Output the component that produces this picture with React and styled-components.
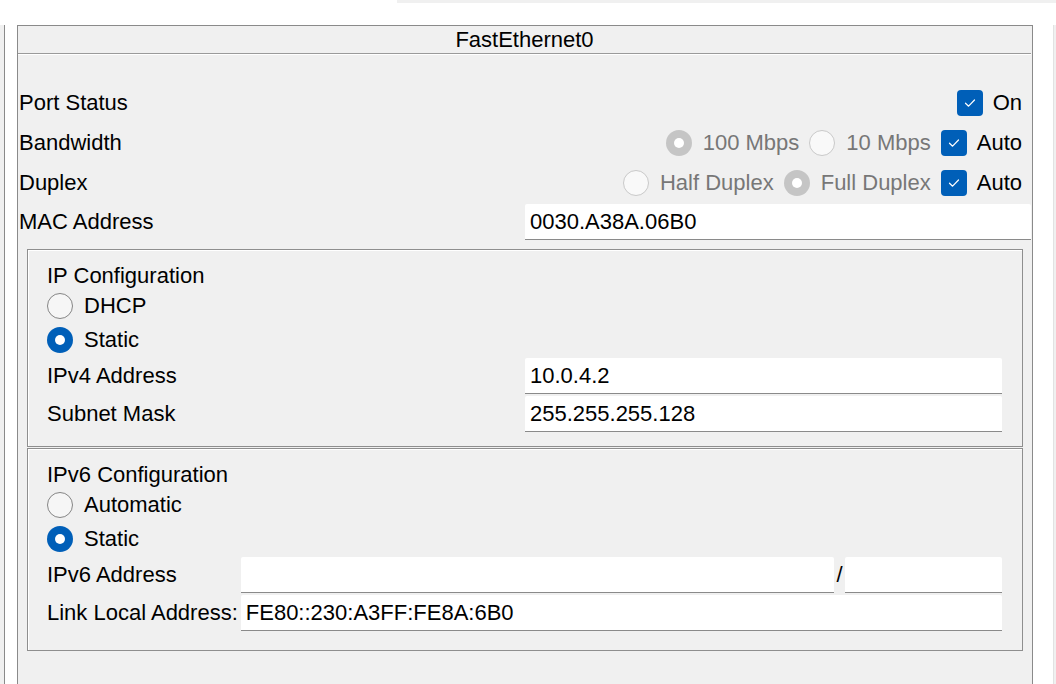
import React from "react";
import styled, { createGlobalStyle } from "styled-components";

const GlobalStyle = createGlobalStyle`
  html, body {
    margin: 0;
    padding: 0;
    background: #ffffff;
    overflow: hidden;
  }
  body {
    font-family: "Liberation Sans", Arial, sans-serif;
    font-size: 22px;
    color: #000;
  }
`;

const Page = styled.div`
  width: 1056px;
  height: 684px;
  overflow: hidden;
  display: flex;
  flex-direction: column;
`;

const TopBand = styled.div`
  flex: none;
  height: 3px;
  margin-left: 397px;
  background: #f0f0f0;
`;

const Workspace = styled.div`
  flex: none;
  display: flex;
  margin-top: 22px;
`;

const SideStrip = styled.div`
  width: 4px;
  background: #f0f0f0;
  border-right: 1px solid #8a8a8a;
`;

const EdgeStrip = styled.div`
  width: 2px;
  margin-left: auto;
  background: #f0f0f0;
  border-left: 1px solid #e2e2e2;
`;

const Panel = styled.section`
  margin-left: 12px;
  width: 1014px;
  height: 680px;
  background: #f0f0f0;
  border: 1px solid #8a8a8a;
  display: flex;
  flex-direction: column;
`;

const PanelTitle = styled.div`
  height: 27px;
  display: flex;
  align-items: center;
  justify-content: center;
  line-height: 1;
  margin-right: 1px;
  border-bottom: 1px solid #9a9a9a;
  box-shadow: 0 1px 0 #ffffff;
`;

const PanelBody = styled.div`
  padding: 29px 0 0 1px;
  display: flex;
  flex-direction: column;
`;

const SettingRow = styled.div`
  height: 40px;
  display: flex;
  align-items: center;
  justify-content: space-between;
  padding-right: 10px;
  line-height: 1;
`;

const Text = styled.span`
  white-space: nowrap;
  color: ${(p) => (p.$disabled ? "#777777" : "#000000")};
`;

const Controls = styled.div`
  display: flex;
  align-items: center;
  gap: 10px;
`;

const Option = styled.label`
  display: flex;
  align-items: center;
  gap: ${(p) => p.$gap || 10}px;
`;

const Radio = styled.span`
  box-sizing: border-box;
  width: 26px;
  height: 26px;
  border-radius: 50%;
  display: inline-flex;
  align-items: center;
  justify-content: center;
  flex: none;
  background: ${(p) =>
    p.$checked ? (p.$disabled ? "#c5c5c5" : "#005fb8") : p.$disabled ? "#f9f9f9" : "#f6f6f6"};
  border: ${(p) =>
    p.$checked
      ? "none"
      : p.$disabled
      ? "1px solid #c9c9c9"
      : "1.5px solid #858585"};
  &::after {
    content: "";
    display: ${(p) => (p.$checked ? "block" : "none")};
    width: 10px;
    height: 10px;
    border-radius: 50%;
    background: #ffffff;
  }
`;

const CheckBox = styled.span`
  width: 26px;
  height: 26px;
  border-radius: 4px;
  background: #005fb8;
  display: inline-flex;
  align-items: center;
  justify-content: center;
  flex: none;
`;

const FieldRow = styled.div`
  height: ${(p) => p.$height || 38}px;
  display: grid;
  grid-template-columns: ${(p) => p.$labelWidth}px 1fr;
  align-items: center;
  line-height: 1;
  padding-right: ${(p) => p.$padRight || 0}px;
`;

const TextField = styled.div`
  box-sizing: border-box;
  height: 36px;
  background: #ffffff;
  border-bottom: 1px solid #8a8a8a;
  border-radius: 2px 2px 0 0;
  display: flex;
  align-items: center;
  padding-left: 5px;
  white-space: nowrap;
  width: ${(p) => (p.$width ? `${p.$width}px` : "auto")};
  flex: ${(p) => (p.$width ? "none" : "1")};
`;

const Group = styled.fieldset`
  margin: ${(p) => p.$top || 0}px 9px 0 8px;
  padding: 12px 20px ${(p) => p.$bottom}px 19px;
  border: 1px solid #8e8e8e;
  box-shadow: inset 1px 1px 0 #ffffff;
  display: flex;
  flex-direction: column;
  min-width: 0;
`;

const GroupTitle = styled.div`
  height: 27px;
  display: flex;
  align-items: center;
  line-height: 1;
`;

const RadioRow = styled.div`
  height: 34px;
  display: flex;
  align-items: center;
  line-height: 1;
`;

const V6Grid = styled.div`
  display: grid;
  grid-template-columns: max-content 1fr;
  column-gap: 3px;
  grid-auto-rows: 38px;
  align-items: center;
  line-height: 1;
`;

const AddressPair = styled.div`
  display: flex;
  align-items: center;
`;

const Slash = styled.span`
  width: 11px;
  text-align: center;
`;

const Check = () => (
  <svg width="14" height="14" viewBox="0 0 14 14" fill="none">
    <polyline
      points="2.5,7.2 5.6,10.2 11.5,4"
      stroke="#ffffff"
      strokeWidth="1.2"
      strokeLinecap="round"
      strokeLinejoin="round"
    />
  </svg>
);

const RadioOption = ({ checked, disabled, children }) => (
  <Option $gap={11}>
    <Radio $checked={checked} $disabled={disabled} />
    <Text $disabled={disabled}>{children}</Text>
  </Option>
);

const CheckOption = ({ children }) => (
  <Option $gap={10}>
    <CheckBox>
      <Check />
    </CheckBox>
    <Text>{children}</Text>
  </Option>
);

export default function App() {
  return (
    <>
      <GlobalStyle />
      <Page>
        <TopBand />
        <Workspace>
          <SideStrip />
          <Panel>
            <PanelTitle>FastEthernet0</PanelTitle>
            <PanelBody>
              <SettingRow>
                <Text>Port Status</Text>
                <Controls>
                  <CheckOption>On</CheckOption>
                </Controls>
              </SettingRow>
              <SettingRow>
                <Text>Bandwidth</Text>
                <Controls>
                  <RadioOption checked disabled>
                    100 Mbps
                  </RadioOption>
                  <RadioOption disabled>10 Mbps</RadioOption>
                  <CheckOption>Auto</CheckOption>
                </Controls>
              </SettingRow>
              <SettingRow>
                <Text>Duplex</Text>
                <Controls>
                  <RadioOption disabled>Half Duplex</RadioOption>
                  <RadioOption checked disabled>
                    Full Duplex
                  </RadioOption>
                  <CheckOption>Auto</CheckOption>
                </Controls>
              </SettingRow>
              <FieldRow $labelWidth={506} $padRight={1}>
                <Text>MAC Address</Text>
                <TextField>0030.A38A.06B0</TextField>
              </FieldRow>

              <Group $top={8} $bottom={13}>
                <GroupTitle>IP Configuration</GroupTitle>
                <RadioRow>
                  <RadioOption>DHCP</RadioOption>
                </RadioRow>
                <RadioRow>
                  <RadioOption checked>Static</RadioOption>
                </RadioRow>
                <FieldRow $labelWidth={478}>
                  <Text>IPv4 Address</Text>
                  <TextField>10.0.4.2</TextField>
                </FieldRow>
                <FieldRow $labelWidth={478}>
                  <Text>Subnet Mask</Text>
                  <TextField>255.255.255.128</TextField>
                </FieldRow>
              </Group>

              <Group $top={1} $bottom={18}>
                <GroupTitle>IPv6 Configuration</GroupTitle>
                <RadioRow>
                  <RadioOption>Automatic</RadioOption>
                </RadioRow>
                <RadioRow>
                  <RadioOption checked>Static</RadioOption>
                </RadioRow>
                <V6Grid>
                  <Text>IPv6 Address</Text>
                  <AddressPair>
                    <TextField />
                    <Slash>/</Slash>
                    <TextField $width={157} />
                  </AddressPair>
                  <Text>Link Local Address:</Text>
                  <TextField>FE80::230:A3FF:FE8A:6B0</TextField>
                </V6Grid>
              </Group>
            </PanelBody>
          </Panel>
          <EdgeStrip />
        </Workspace>
      </Page>
    </>
  );
}
